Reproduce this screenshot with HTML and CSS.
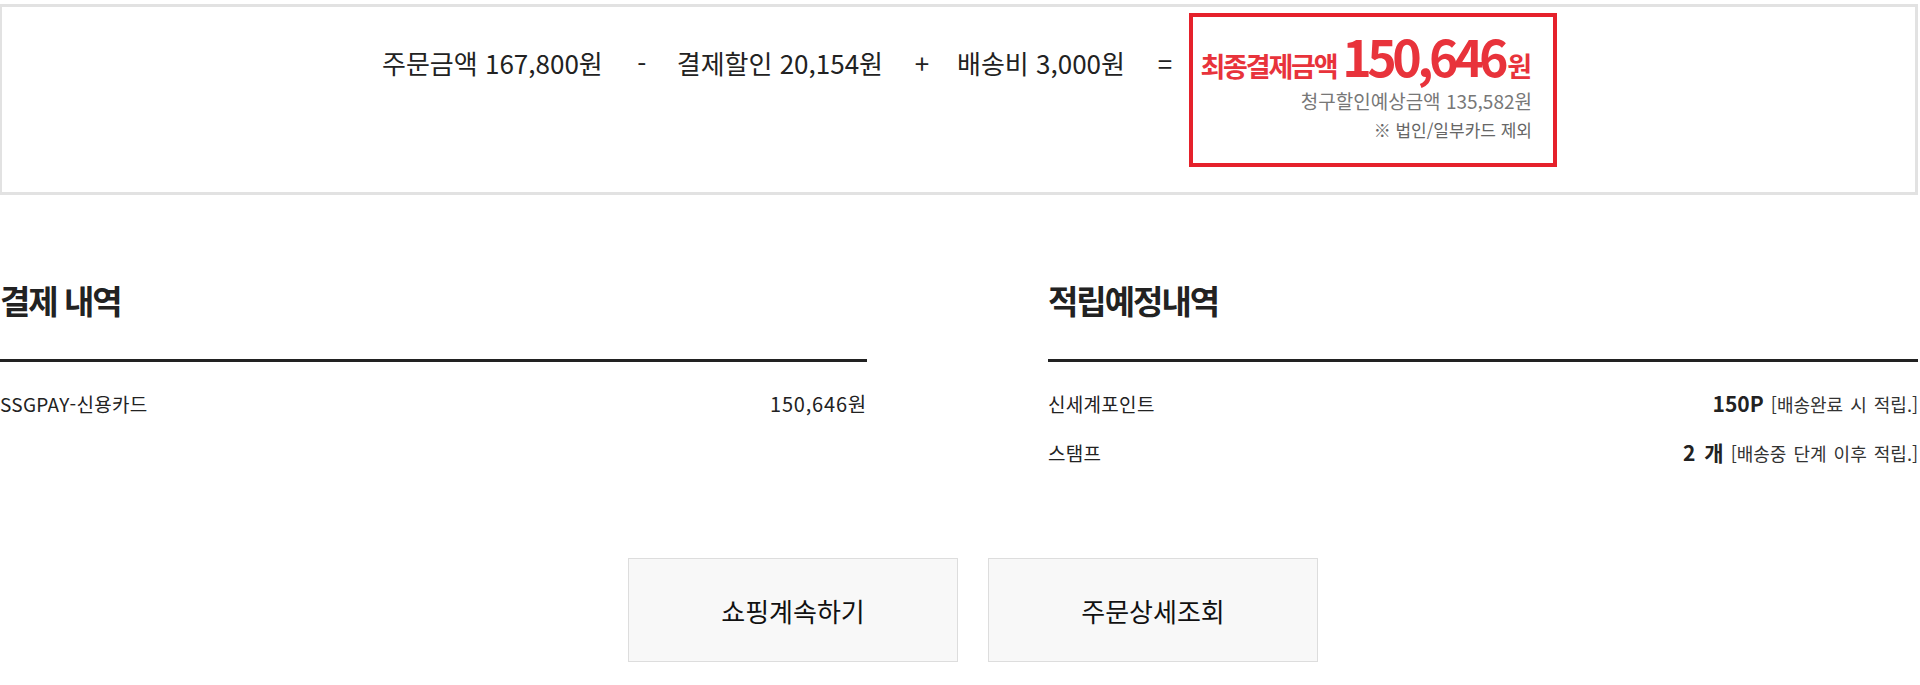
FILE: index.html
```html
<!DOCTYPE html>
<html lang="ko">
<head>
<meta charset="UTF-8">
<title>주문완료</title>
<link rel="stylesheet" href="styles.css">
</head>
<body>
    <div class="summary">
        <div class="calc">
            <span class="item">주문금액 167,800원</span>
            <span class="op">-</span>
            <span class="item">결제할인 20,154원</span>
            <span class="op">+</span>
            <span class="item">배송비 3,000원</span>
            <span class="op op-eq">=</span>
            <div class="final">
                <p class="final-total"><span class="final-label">최종결제금액</span><em class="final-price">150,646</em><span class="final-won">원</span></p>
                <p class="final-card">청구할인예상금액 135,582원</p>
                <p class="final-note">※ 법인/일부카드 제외</p>
            </div>
        </div>
    </div>

    <div class="details">
        <section class="detail">
            <h3 class="detail-title">결제 내역</h3>
            <ul class="detail-list">
                <li class="detail-row">
                    <span class="detail-name">SSGPAY-신용카드</span>
                    <span class="detail-price">150,646원</span>
                </li>
            </ul>
        </section>
        <section class="detail">
            <h3 class="detail-title">적립예정내역</h3>
            <ul class="detail-list">
                <li class="detail-row">
                    <span class="detail-name">신세계포인트</span>
                    <span class="detail-value"><strong>150P</strong> [배송완료 시 적립.]</span>
                </li>
                <li class="detail-row">
                    <span class="detail-name">스탬프</span>
                    <span class="detail-value"><strong>2 개</strong> [배송중 단계 이후 적립.]</span>
                </li>
            </ul>
        </section>
    </div>

    <div class="actions">
        <a class="btn" href="#">쇼핑계속하기</a>
        <a class="btn" href="#">주문상세조회</a>
    </div>
</body>
</html>
```

FILE: styles.css
```css
* {
    box-sizing: border-box;
}
body {
    margin: 0;
    width: 1920px;
    font-family: "Noto Sans CJK KR", "Noto Sans", sans-serif;
    color: #222;
    background: #fff;
}
p, ul, h3 {
    margin: 0;
    padding: 0;
}
ul {
    list-style: none;
}

/* top summary */
.summary {
    width: 1918px;
    height: 191px;
    margin-top: 4px;
    border: 3px solid #e2e2e2;
    border-left-width: 2px;
    padding: 6px 0 0 22px;
}
.calc {
    display: flex;
    justify-content: center;
    align-items: flex-start;
}
.item {
    margin-top: 25px;
    line-height: 50px;
    font-size: 26px;
    color: #222;
}
.op {
    margin-top: 25px;
    line-height: 50px;
    font-size: 26px;
    width: 74px;
    text-align: center;
    padding-left: 4px;
}
.op-eq {
    width: 64px;
    padding-left: 16px;
}
.final {
    width: 368px;
    border: 4px solid #e5212b;
    padding: 13px 21px 21px 0;
    text-align: right;
}
.final-total {
    display: flex;
    justify-content: flex-end;
    align-items: baseline;
    height: 50px;
    color: #e8333b;
    font-weight: 700;
    white-space: nowrap;
}
.final-total span,
.final-total em {
    line-height: 1;
}
.final-label {
    font-size: 27px;
    letter-spacing: -2.2px;
    margin-right: 6px;
}
.final-price {
    font-style: normal;
    font-size: 50px;
    letter-spacing: -4.5px;
    margin-right: 3px;
}
.final-won {
    font-size: 27px;
}
.final-card {
    margin-top: 8px;
    line-height: 26px;
    font-size: 19px;
    color: #777;
}
.final-note {
    margin-top: 4px;
    line-height: 24px;
    font-size: 17px;
    color: #666;
}

/* payment / points */
.details {
    display: grid;
    grid-template-columns: 867px 870px;
    column-gap: 181px;
    margin-top: 85px;
}
.detail-title {
    font-size: 33px;
    line-height: 40px;
    font-weight: 700;
    letter-spacing: -2px;
    padding-bottom: 39px;
    border-bottom: 3px solid #222;
}
.detail-list {
    padding-top: 26px;
}
.detail-row {
    display: flex;
    justify-content: space-between;
    align-items: center;
    height: 30px;
    margin-bottom: 19px;
    font-size: 19px;
}
.detail-name {
    letter-spacing: 0.3px;
}
.detail-price {
    font-size: 20px;
    letter-spacing: 0.8px;
}
.detail-value {
    font-size: 18px;
    word-spacing: 2px;
    color: #333;
}
.detail-value strong {
    font-size: 21px;
    color: #222;
    word-spacing: 3px;
}

/* buttons */
.actions {
    display: flex;
    justify-content: center;
    gap: 30px;
    padding-left: 26px;
    margin-top: 72px;
}
.btn {
    display: flex;
    align-items: center;
    justify-content: center;
    width: 330px;
    height: 104px;
    border: 1px solid #ddd;
    background: #f8f8f8;
    font-size: 26px;
    color: #111;
    text-decoration: none;
}
```
